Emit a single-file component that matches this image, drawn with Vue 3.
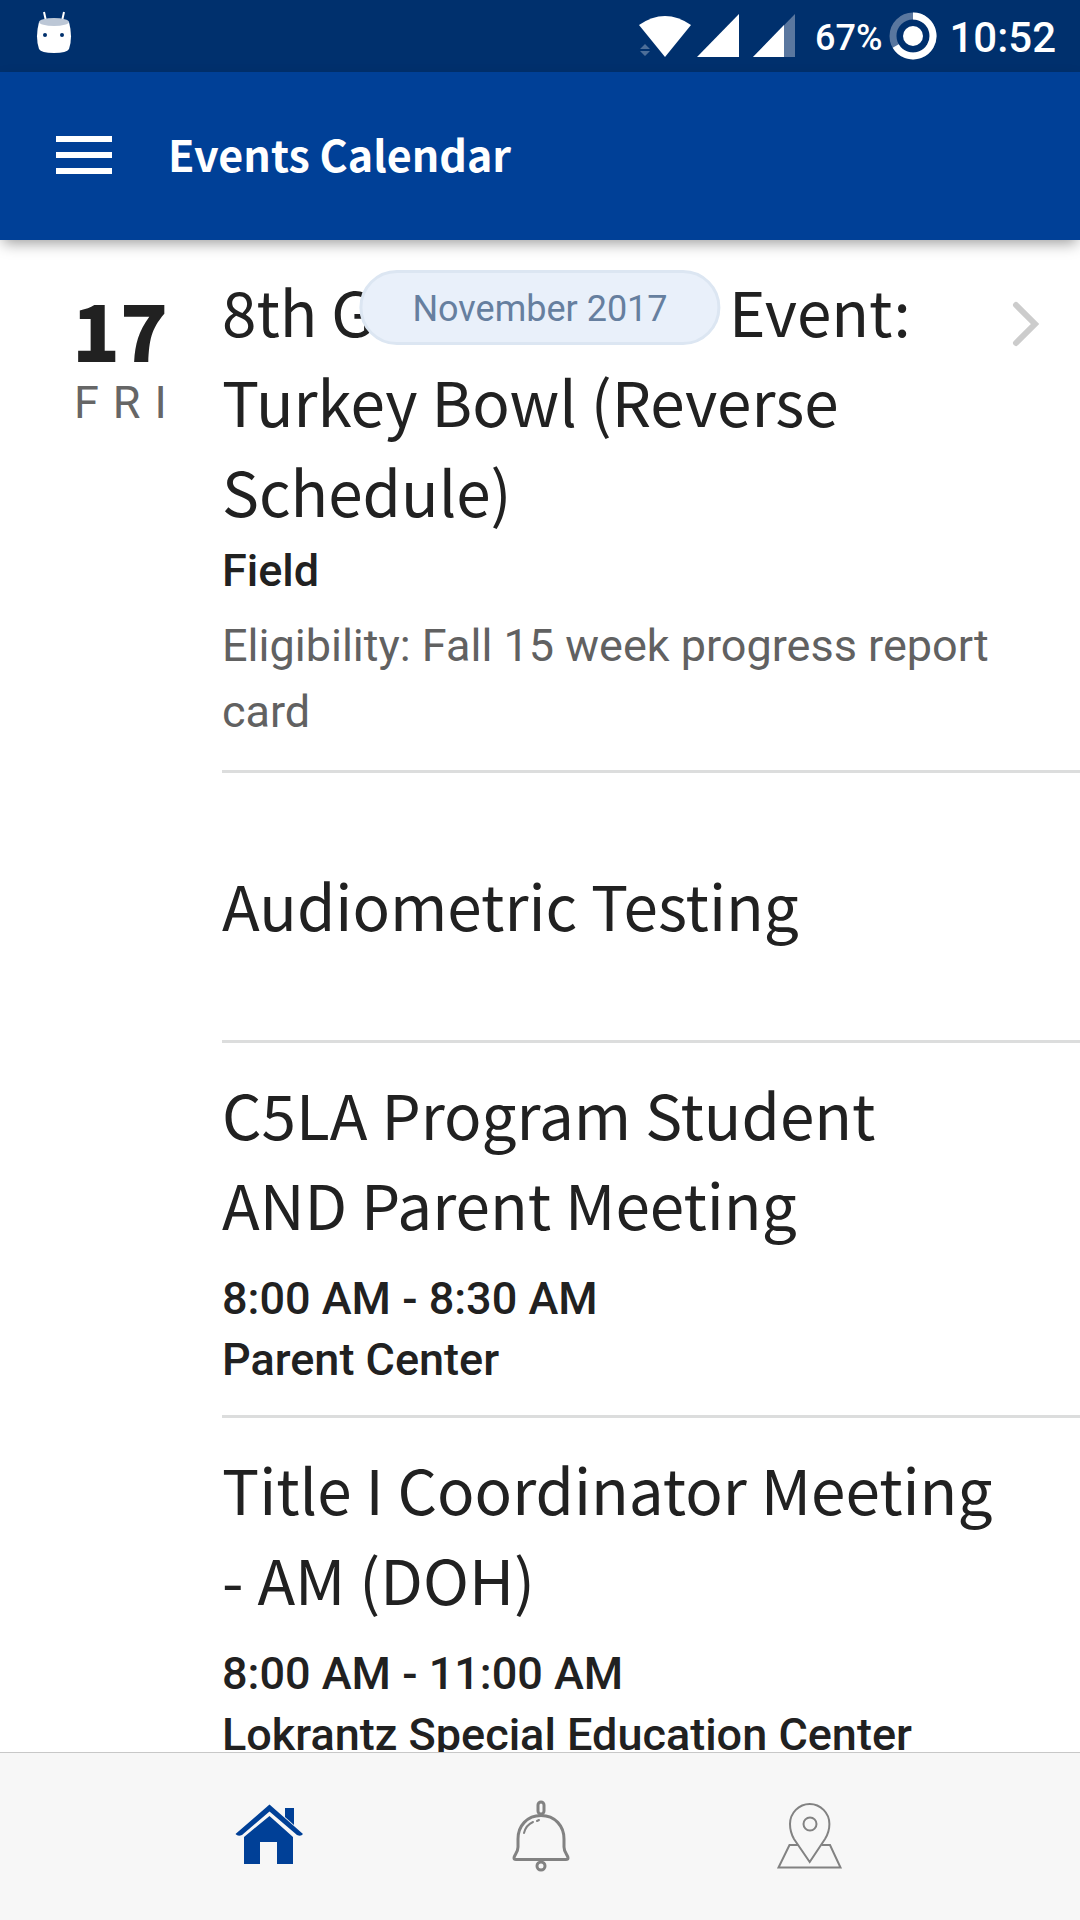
<script setup>
const events = [
  {
    day: '17',
    weekday: 'FRI',
    title: '8th Grade Block - Event: Turkey Bowl (Reverse Schedule)',
    place: 'Field',
    note: 'Eligibility: Fall 15 week progress report card',
    link: true,
  },
  { title: 'Audiometric Testing' },
  {
    title: 'C5LA Program Student AND Parent Meeting',
    time: '8:00 AM - 8:30 AM',
    place: 'Parent Center',
  },
  {
    title: 'Title I Coordinator Meeting - AM (DOH)',
    time: '8:00 AM - 11:00 AM',
    place: 'Lokrantz Special Education Center',
  },
]
</script>

<template>
  <div class="screen">
    <div class="status">
      <svg class="robot" width="36" height="44" viewBox="0 0 36 44" aria-hidden="true">
        <path d="M8 1l2 9M28 1l-2 9" stroke="#fff" stroke-width="2" />
        <path d="M3 11Q-1 26 3 38Q5 42 18 42Q31 42 33 38Q37 26 33 11Z" fill="#fff" />
        <ellipse cx="18" cy="11" rx="15" ry="4" fill="#bcc7d6" />
        <circle cx="9" cy="24" r="2" fill="#00306d" />
        <circle cx="26" cy="24" r="2" fill="#00306d" />
      </svg>
      <div class="indicators">
        <svg width="52" height="44" viewBox="0 0 52 44" aria-hidden="true">
          <path d="M0 11Q26-7 52 11L26 43Z" fill="#fff" />
          <path d="M1 35l5-5 5 5zM1 37h10l-5 5z" fill="#4d6e98" />
        </svg>
        <svg width="42" height="44" viewBox="0 0 42 44" aria-hidden="true">
          <path d="M0 43L42 0V43Z" fill="#fff" />
        </svg>
        <svg class="second" width="42" height="44" viewBox="0 0 42 44" aria-hidden="true">
          <path d="M0 43L42 0V43Z" fill="#5a779f" />
          <path d="M0 43L31 11V43Z" fill="#fff" />
        </svg>
        <span class="battery">67%</span>
        <svg class="ring" width="48" height="48" viewBox="0 0 48 48" aria-hidden="true">
          <circle cx="24" cy="24" r="20" fill="none" stroke="#5a779f" stroke-width="7" />
          <path d="M24 4A20 20 0 1 1 6.7 34" fill="none" stroke="#fff" stroke-width="7" />
          <circle cx="24" cy="24" r="10" fill="#fff" />
        </svg>
        <span class="clock">10:52</span>
      </div>
    </div>

    <header class="bar">
      <button class="menu" type="button" aria-label="Menu">
        <span></span><span></span><span></span>
      </button>
      <h1>Events Calendar</h1>
    </header>

    <main class="events">
      <div class="month">November 2017</div>
      <article v-for="event in events" :key="event.title" class="event">
        <div class="date">
          <div v-if="event.day" class="day">{{ event.day }}</div>
          <div v-if="event.weekday" class="weekday">{{ event.weekday }}</div>
        </div>
        <div class="body">
          <div class="text">
            <h2>{{ event.title }}</h2>
            <p v-if="event.time" class="time">{{ event.time }}</p>
            <p v-if="event.place" class="place">{{ event.place }}</p>
            <p v-if="event.note" class="note">{{ event.note }}</p>
          </div>
          <a v-if="event.link" class="more" href="#" aria-label="Event details">
            <svg width="28" height="46" viewBox="0 0 28 46">
              <path d="M4 4L23 23L4 42" fill="none" stroke="#ccc" stroke-width="6" stroke-linecap="round" />
            </svg>
          </a>
        </div>
      </article>
    </main>

    <nav class="tabs">
      <a href="#" aria-label="Home">
        <svg width="90" height="90" viewBox="0 0 90 90" fill="#004097">
          <path d="M60 17H69V34L60 26Z" />
          <path d="M44.500 13.500L78 43Q76 46 72 44L44.500 20.500L17 44Q13 46 10.500 43Z" />
          <path d="M44.500 25L68 46V73H52V51H35V73H19V46Z" />
        </svg>
      </a>
      <a href="#" aria-label="Notifications">
        <svg width="90" height="90" viewBox="0 0 90 90" fill="none" stroke="#828282" stroke-width="3" stroke-linecap="round">
          <rect x="43" y="11" width="6" height="12" rx="3" />
          <path d="M46 24.500C32 24.500 23 35 23 48V56C23 62 19 64 19 67Q19 68.500 21 68.500H71Q73 68.500 73 67C73 64 69 62 69 56V48C69 35 60 24.500 46 24.500Z" />
          <circle cx="46" cy="75" r="4" />
          <path d="M29 42Q31 34 38 31M42 30L44 29" stroke-width="2" />
        </svg>
      </a>
      <a href="#" aria-label="Map">
        <svg width="90" height="90" viewBox="0 0 90 90" fill="none" stroke="#828282" stroke-width="2">
          <path d="M44.700 71L29 48Q25 41 25 33A19.700 20 0 0 1 64.400 33Q64.400 41 60 48Z" />
          <circle cx="45" cy="33" r="6.500" />
          <path d="M33 54H24.500L13.500 76.500H75.500L65 54H56.500" />
        </svg>
      </a>
    </nav>
  </div>
</template>

<style>
body {
  background: #fff;
}
</style>

<style scoped>
.screen {
  display: flex;
  flex-direction: column;
  height: 100vh;
  font-family: Roboto, sans-serif;
  color: #212121;
}
.status {
  flex: none;
  display: flex;
  justify-content: space-between;
  align-items: flex-start;
  height: 72px;
  padding: 0 24px 0 36px;
  background: #00306d;
  color: #fff;
  box-sizing: border-box;
}
.robot {
  margin-top: 11px;
}
.indicators {
  display: flex;
  align-items: center;
  height: 72px;
}
.indicators svg {
  flex: none;
  margin-right: 6px;
}
.indicators .second {
  margin-left: 8px;
  margin-right: 20px;
}
.battery,
.clock {
  padding-top: 3px;
  line-height: 60px;
  font-weight: 500;
}
.battery {
  font-size: 36px;
}
.clock {
  font-size: 42px;
}
.indicators .ring {
  margin-left: 7px;
  margin-right: 12px;
}
.bar {
  flex: none;
  position: relative;
  z-index: 2;
  display: flex;
  align-items: center;
  height: 168px;
  padding: 0 56px 2px;
  background: #004097;
  color: #fff;
  box-shadow: 0 6px 14px -3px rgba(0, 0, 0, 0.4);
  box-sizing: border-box;
}
.menu {
  display: flex;
  flex-direction: column;
  gap: 10px;
  width: 56px;
  margin: 0 56px 0 0;
  padding: 0;
  border: 0;
  background: none;
}
.menu span {
  height: 6px;
  background: #fff;
}
h1 {
  margin: 0;
  padding-bottom: 4px;
  font: 700 43px/64px "Noto Sans CJK SC", sans-serif;
}
.events {
  flex: 1;
  min-height: 0;
  position: relative;
  overflow: hidden;
}
.month {
  position: absolute;
  top: 30px;
  left: 50%;
  transform: translateX(-50%);
  padding: 4px 50px 0;
  border: 3px solid #dce6f2;
  border-radius: 38px;
  background: #e9f0fa;
  color: #667f9f;
  font-size: 36px;
  line-height: 65px;
  white-space: nowrap;
}
.event {
  display: flex;
}
.date {
  flex: none;
  width: 222px;
  padding: 40px 0 0 72px;
  box-sizing: border-box;
}
.day {
  font: 900 79px/96px "Noto Sans CJK SC", sans-serif;
}
.weekday {
  padding: 3px 0 0 2px;
  font-size: 45px;
  line-height: 48px;
  letter-spacing: 14px;
  color: #666;
}
.body {
  flex: 1;
  display: flex;
  align-items: center;
  min-height: 270px;
  padding: 25px 40px 25px 0;
  border-bottom: 3px solid #dcdddd;
  box-sizing: border-box;
}
.text {
  flex: 1;
  margin-right: 40px;
}
.more {
  align-self: flex-start;
  display: block;
  height: 46px;
  margin: 36px 0 0 -28px;
}
.more svg {
  display: block;
}
h2 {
  margin: 0;
  font: 400 62px/90px "Noto Sans CJK SC", sans-serif;
}
h2:only-child {
  padding-bottom: 5px;
}
p {
  margin: 0;
  font-size: 45px;
}
.time,
.place {
  margin-top: 5px;
  line-height: 61px;
  font-weight: 500;
}
.time {
  margin-top: 20px;
}
.time + .place {
  margin-top: 0;
}
.note {
  margin-top: 12px;
  line-height: 66px;
  color: #616161;
}
.tabs {
  flex: none;
  display: flex;
  justify-content: space-around;
  align-items: center;
  height: 168px;
  padding: 0 12.5% 2px;
  border-top: 1px solid #c8c8c8;
  background: #f7f7f7;
  box-sizing: border-box;
}
.tabs a,
.tabs svg {
  display: block;
}
</style>
